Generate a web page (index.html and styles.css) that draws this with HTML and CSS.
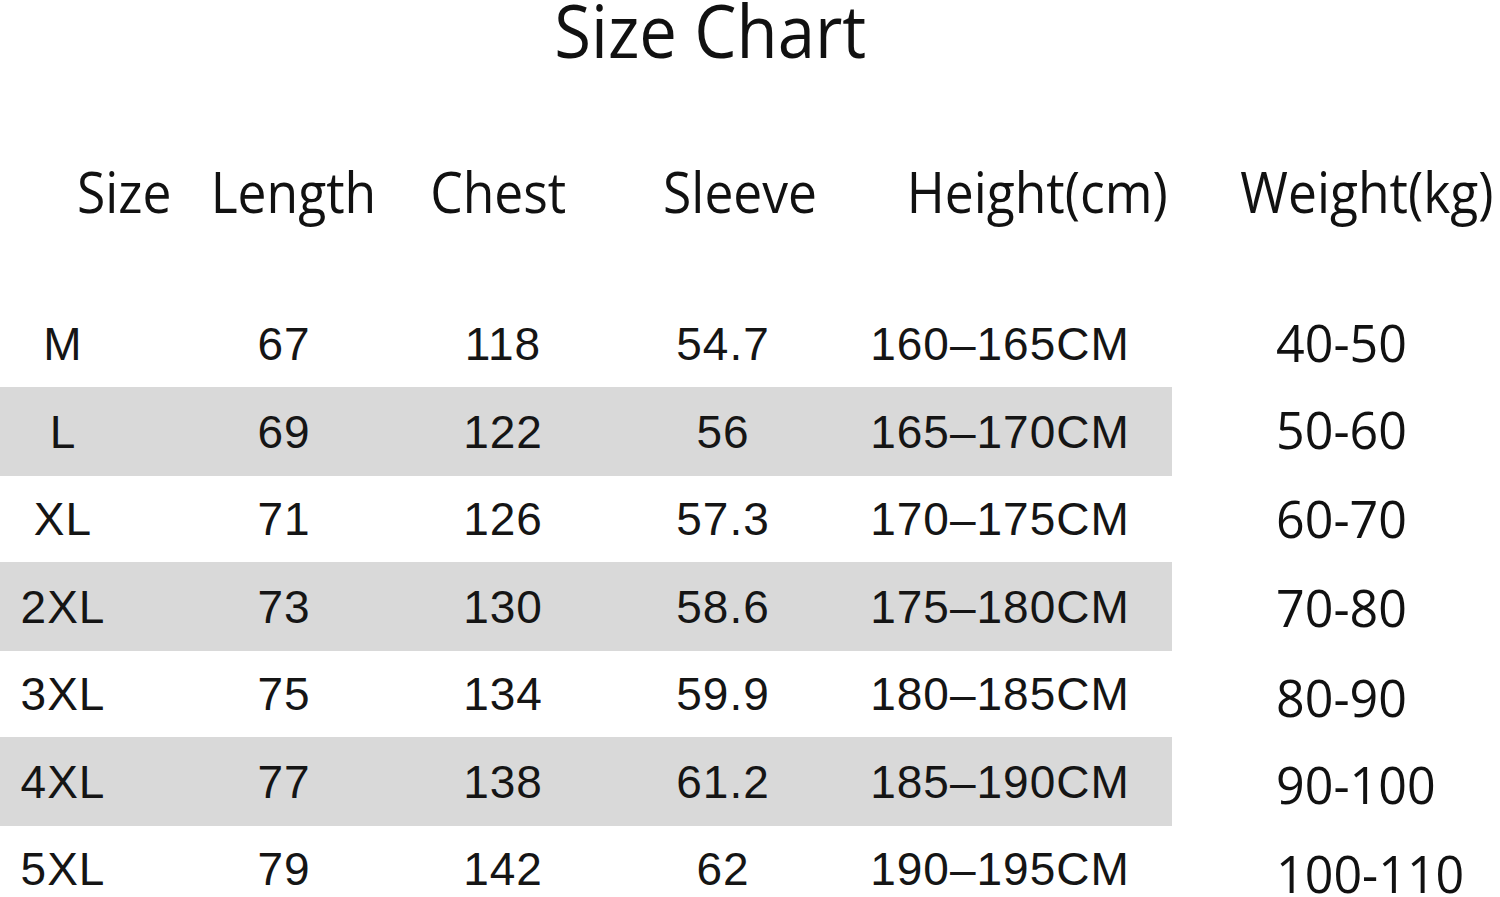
FILE: index.html
```html
<!DOCTYPE html>
<html lang="en">
<head>
<meta charset="utf-8">
<title>Size Chart</title>
<link rel="stylesheet" href="styles.css">
</head>
<body>
<main class="chart">
  <h1 class="title"><span>Size Chart</span></h1>
  <div class="head">
    <div class="hcell"><span>Size</span></div>
    <div class="hcell"><span>Length</span></div>
    <div class="hcell"><span>Chest</span></div>
    <div class="hcell"><span>Sleeve</span></div>
    <div class="hcell"><span>Height(cm)</span></div>
    <div class="hcell"><span>Weight(kg)</span></div>
  </div>
  <div class="rows">
    <div class="row">
      <div class="band"><span class="c">M</span><span class="c">67</span><span class="c">118</span><span class="c">54.7</span><span class="c">160–165CM</span></div>
      <div class="weight"><span>40-50</span></div>
    </div>
    <div class="row alt">
      <div class="band"><span class="c">L</span><span class="c">69</span><span class="c">122</span><span class="c">56</span><span class="c">165–170CM</span></div>
      <div class="weight"><span>50-60</span></div>
    </div>
    <div class="row">
      <div class="band"><span class="c">XL</span><span class="c">71</span><span class="c">126</span><span class="c">57.3</span><span class="c">170–175CM</span></div>
      <div class="weight"><span>60-70</span></div>
    </div>
    <div class="row alt">
      <div class="band"><span class="c">2XL</span><span class="c">73</span><span class="c">130</span><span class="c">58.6</span><span class="c">175–180CM</span></div>
      <div class="weight"><span>70-80</span></div>
    </div>
    <div class="row">
      <div class="band"><span class="c">3XL</span><span class="c">75</span><span class="c">134</span><span class="c">59.9</span><span class="c">180–185CM</span></div>
      <div class="weight"><span>80-90</span></div>
    </div>
    <div class="row alt">
      <div class="band"><span class="c">4XL</span><span class="c">77</span><span class="c">138</span><span class="c">61.2</span><span class="c">185–190CM</span></div>
      <div class="weight"><span>90-100</span></div>
    </div>
    <div class="row">
      <div class="band"><span class="c">5XL</span><span class="c">79</span><span class="c">142</span><span class="c">62</span><span class="c">190–195CM</span></div>
      <div class="weight"><span>100-110</span></div>
    </div>
  </div>
</main>
</body>
</html>
```
FILE: styles.css
```css
html, body {
  margin: 0;
  padding: 0;
  background: #ffffff;
}

body {
  width: 1500px;
  height: 897px;
  overflow: hidden;
  color: #111111;
}

.chart {
  display: flex;
  flex-direction: column;
}

.title {
  margin: 0;
  font-family: "Open Sans", "Noto Sans", sans-serif;
  font-weight: 400;
  font-size: 74px;
  line-height: 60px;
  height: 60px;
  width: 1420px;
  display: flex;
  justify-content: center;
  color: #111111;
}

.title span {
  display: inline-block;
  white-space: nowrap;
  transform: scaleX(0.906);
  transform-origin: center;
}

.head {
  margin-top: 91px;
  display: grid;
  grid-template-columns: 248px 90px 320px 164px 430px 230px;
  height: 80px;
  font-family: "Open Sans", "Noto Sans", sans-serif;
  font-size: 57px;
  line-height: 80px;
}

.hcell {
  display: flex;
  justify-content: center;
  white-space: nowrap;
}

.hcell span {
  display: inline-block;
  transform: scaleX(0.905);
  transform-origin: center;
}

.rows {
  margin-top: 70px;
  display: flex;
  flex-direction: column;
}

.row {
  display: flex;
  height: 86px;
  align-items: stretch;
}

.row.alt {
  height: 89px;
}

.row.alt .band {
  background: #d9d9d9;
}

.band {
  width: 1172px;
  box-sizing: border-box;
  padding-right: 54px;
  display: grid;
  grid-template-columns: 126px 316px 122px 318px 236px;
  align-items: center;
  font-family: "Liberation Sans", Arial, sans-serif;
  font-size: 46px;
  letter-spacing: 1px;
  color: #151515;
}

.c {
  display: flex;
  justify-content: center;
  white-space: nowrap;
}

.weight {
  flex: 1;
  display: flex;
  align-items: center;
  padding-left: 104px;
  font-family: "Open Sans", "Noto Sans", sans-serif;
  font-size: 52px;
  white-space: nowrap;
  color: #111111;
}

.weight span {
  display: inline-block;
  transform-origin: left center;
  transform: scaleX(0.965);
}

.row:nth-child(1) .weight span { transform: translateY(-3px) scaleX(0.965); }
.row:nth-child(2) .weight span { transform: translateY(-3px) scaleX(0.965); }
.row:nth-child(3) .weight span { transform: translateY(-2px) scaleX(0.965); }
.row:nth-child(5) .weight span { transform: translateY(2px) scaleX(0.965); }
.row:nth-child(6) .weight span { transform: translateY(2px) scaleX(0.965); }
.row:nth-child(7) .weight span { transform: translateY(3px) scaleX(0.965); }
```
